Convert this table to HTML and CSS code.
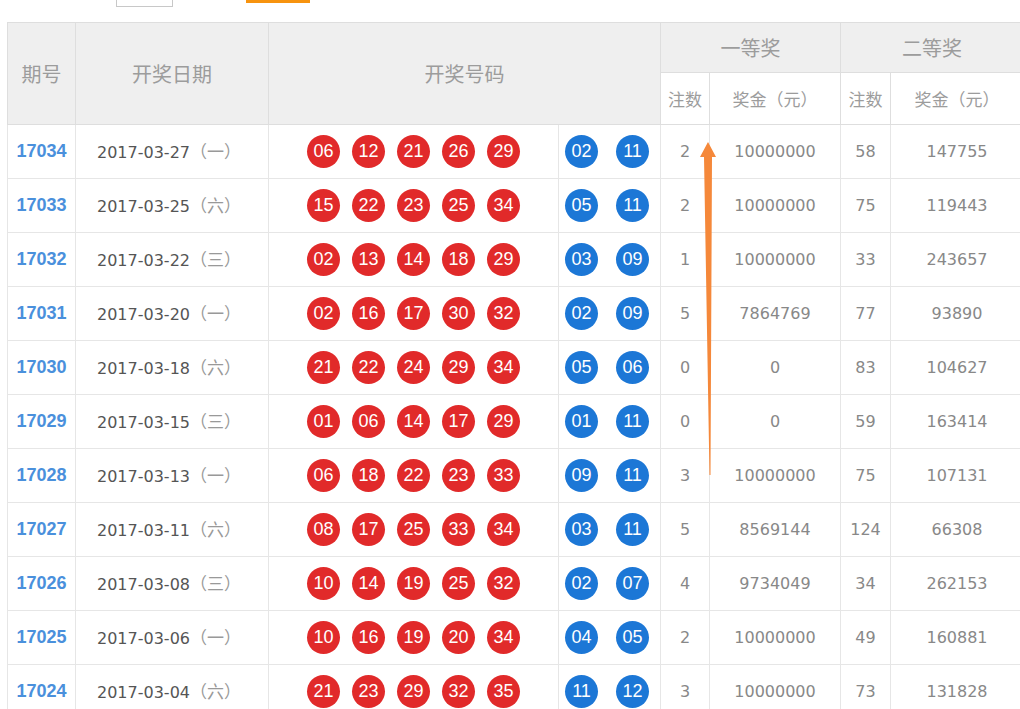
FILE: index.html
```html
<!DOCTYPE html>
<html lang="zh-CN">
<head>
<meta charset="utf-8">
<title>开奖结果</title>
<link rel="stylesheet" href="styles.css">
</head>
<body>
<div class="topbar">
  <span class="input-box"></span>
  <span class="btn-orange"></span>
</div>
<div class="wrap">
<table class="draws">
  <colgroup>
    <col class="c-issue"><col class="c-date"><col class="c-red"><col class="c-blue">
    <col class="c-n1"><col class="c-m1"><col class="c-n2"><col class="c-m2">
  </colgroup>
  <thead>
    <tr class="h1">
      <th rowspan="2">期号</th>
      <th rowspan="2">开奖日期</th>
      <th rowspan="2" colspan="2">开奖号码</th>
      <th colspan="2">一等奖</th>
      <th colspan="2">二等奖</th>
    </tr>
    <tr class="h2">
      <th class="sub">注数</th>
      <th class="sub">奖金（元）</th>
      <th class="sub">注数</th>
      <th class="sub">奖金（元）</th>
    </tr>
  </thead>
  <tbody>
    <tr><td class="issue">17034</td><td class="date">2017-03-27<span class="wk">（一）</span></td>
      <td class="reds"><i>06</i><i>12</i><i>21</i><i>26</i><i>29</i></td><td class="blues"><i>02</i><i>11</i></td>
      <td>2</td><td>10000000</td><td>58</td><td>147755</td></tr>
    <tr><td class="issue">17033</td><td class="date">2017-03-25<span class="wk">（六）</span></td>
      <td class="reds"><i>15</i><i>22</i><i>23</i><i>25</i><i>34</i></td><td class="blues"><i>05</i><i>11</i></td>
      <td>2</td><td>10000000</td><td>75</td><td>119443</td></tr>
    <tr><td class="issue">17032</td><td class="date">2017-03-22<span class="wk">（三）</span></td>
      <td class="reds"><i>02</i><i>13</i><i>14</i><i>18</i><i>29</i></td><td class="blues"><i>03</i><i>09</i></td>
      <td>1</td><td>10000000</td><td>33</td><td>243657</td></tr>
    <tr><td class="issue">17031</td><td class="date">2017-03-20<span class="wk">（一）</span></td>
      <td class="reds"><i>02</i><i>16</i><i>17</i><i>30</i><i>32</i></td><td class="blues"><i>02</i><i>09</i></td>
      <td>5</td><td>7864769</td><td>77</td><td>93890</td></tr>
    <tr><td class="issue">17030</td><td class="date">2017-03-18<span class="wk">（六）</span></td>
      <td class="reds"><i>21</i><i>22</i><i>24</i><i>29</i><i>34</i></td><td class="blues"><i>05</i><i>06</i></td>
      <td>0</td><td>0</td><td>83</td><td>104627</td></tr>
    <tr><td class="issue">17029</td><td class="date">2017-03-15<span class="wk">（三）</span></td>
      <td class="reds"><i>01</i><i>06</i><i>14</i><i>17</i><i>29</i></td><td class="blues"><i>01</i><i>11</i></td>
      <td>0</td><td>0</td><td>59</td><td>163414</td></tr>
    <tr><td class="issue">17028</td><td class="date">2017-03-13<span class="wk">（一）</span></td>
      <td class="reds"><i>06</i><i>18</i><i>22</i><i>23</i><i>33</i></td><td class="blues"><i>09</i><i>11</i></td>
      <td>3</td><td>10000000</td><td>75</td><td>107131</td></tr>
    <tr><td class="issue">17027</td><td class="date">2017-03-11<span class="wk">（六）</span></td>
      <td class="reds"><i>08</i><i>17</i><i>25</i><i>33</i><i>34</i></td><td class="blues"><i>03</i><i>11</i></td>
      <td>5</td><td>8569144</td><td>124</td><td>66308</td></tr>
    <tr><td class="issue">17026</td><td class="date">2017-03-08<span class="wk">（三）</span></td>
      <td class="reds"><i>10</i><i>14</i><i>19</i><i>25</i><i>32</i></td><td class="blues"><i>02</i><i>07</i></td>
      <td>4</td><td>9734049</td><td>34</td><td>262153</td></tr>
    <tr><td class="issue">17025</td><td class="date">2017-03-06<span class="wk">（一）</span></td>
      <td class="reds"><i>10</i><i>16</i><i>19</i><i>20</i><i>34</i></td><td class="blues"><i>04</i><i>05</i></td>
      <td>2</td><td>10000000</td><td>49</td><td>160881</td></tr>
    <tr><td class="issue">17024</td><td class="date">2017-03-04<span class="wk">（六）</span></td>
      <td class="reds"><i>21</i><i>23</i><i>29</i><i>32</i><i>35</i></td><td class="blues"><i>11</i><i>12</i></td>
      <td>3</td><td>10000000</td><td>73</td><td>131828</td></tr>
  </tbody>
</table>
<svg class="arrow" width="20" height="340" viewBox="0 0 20 340" aria-hidden="true">
  <polygon fill="#f5883a" points="9,0 17,15 13,15 11.5,333 10.5,333 5,15 1,15"/>
</svg>
</div>
</body>
</html>
```

FILE: styles.css
```css
html, body {
  margin: 0;
  padding: 0;
  overflow: hidden;
  background: #fff;
}
body {
  font-family: "DejaVu Sans", Verdana, "Noto Sans CJK SC", sans-serif;
}
.topbar {
  height: 22px;
  display: flex;
  align-items: flex-end;
  overflow: hidden;
}
.input-box {
  width: 57px;
  height: 28px;
  margin-left: 116px;
  margin-bottom: 15px;
  border: 1px solid #c8c8c8;
  box-sizing: border-box;
}
.btn-orange {
  width: 64px;
  height: 28px;
  margin-left: 73px;
  margin-bottom: 19px;
  background: #f7930f;
}
.wrap {
  position: relative;
  padding-left: 7px;
}
.draws {
  border-collapse: collapse;
  table-layout: fixed;
  width: 1016px;
}
.c-issue { width: 68px; }
.c-date { width: 193px; }
.c-red { width: 290px; }
.c-blue { width: 102px; }
.c-n1 { width: 49px; }
.c-m1 { width: 131px; }
.c-n2 { width: 50px; }
.c-m2 { width: 133px; }

.draws th, .draws td {
  border: 1px solid #dedede;
  text-align: center;
  vertical-align: middle;
  padding: 0;
  white-space: nowrap;
}
.draws th {
  background: #efefef;
  color: #9c9c9c;
  font-family: "Noto Sans CJK SC", sans-serif;
  font-weight: 400;
  font-size: 20px;
}
.draws th.sub {
  background: #fff;
  font-size: 17px;
  color: #9c9c9c;
}
.h1 { height: 50px; }
.h2 { height: 52px; }
.draws tbody tr { height: 54px; }
.draws td {
  border-color: #e6e6e6;
  color: #888;
  font-size: 16px;
}
.draws td.issue {
  color: #4a90dc;
  font-family: "Liberation Sans", Arial, sans-serif;
  font-weight: 700;
  font-size: 18px;
}
.draws td.date {
  color: #555;
  text-align: left;
  padding-left: 21px;
  line-height: 1;
}
.wk {
  color: #999;
  font-family: "Noto Sans CJK SC", sans-serif;
  font-size: 17px;
  line-height: 1;
}
.reds, .blues {
  font-size: 0;
}
.reds i, .blues i {
  display: inline-block;
  width: 33px;
  height: 33px;
  line-height: 33px;
  border-radius: 50%;
  color: #fff;
  font-style: normal;
  font-family: "Liberation Sans", Arial, sans-serif;
  font-size: 18px;
  text-align: center;
  vertical-align: middle;
}
.reds i {
  background: #e12a2a;
  margin: 0 6px;
}
.draws td.blues {
  text-align: left;
  padding-left: 6px;
}
.blues i {
  background: #1c77d6;
}
.blues i + i {
  margin-left: 18px;
}
.arrow {
  position: absolute;
  left: 699px;
  top: 120px;
}
```
